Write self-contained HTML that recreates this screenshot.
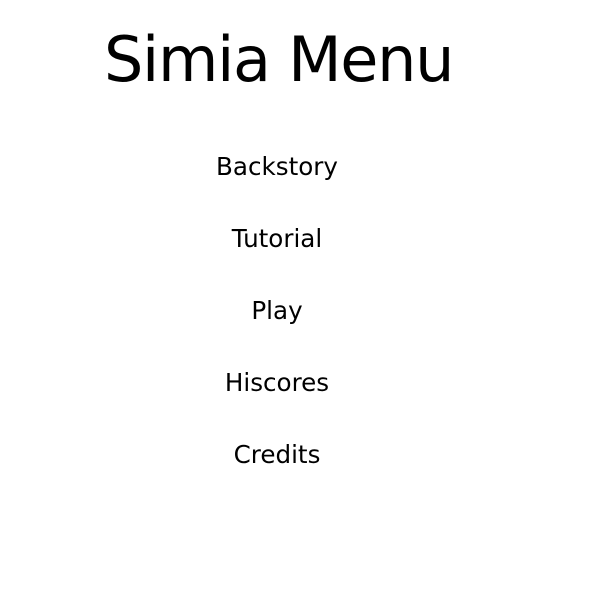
<!DOCTYPE html>
<html><head><style>
html,body{margin:0;padding:0;background:#fff;width:600px;height:600px;overflow:hidden}
body{position:relative;font-family:"DejaVu Sans","Liberation Sans",sans-serif;color:#000}
.t{position:absolute;left:104px;top:20px;font-size:62px;line-height:80px;white-space:nowrap;letter-spacing:-1.3px}
.m{position:absolute;left:177px;width:200px;text-align:center;font-size:24.6px;line-height:30px;white-space:nowrap}
</style></head><body>
<div class="t">Simia Menu</div>
<div class="m" style="top:152px">Backstory</div>
<div class="m" style="top:224px">Tutorial</div>
<div class="m" style="top:296px">Play</div>
<div class="m" style="top:368px">Hiscores</div>
<div class="m" style="top:440px">Credits</div>
</body></html>
